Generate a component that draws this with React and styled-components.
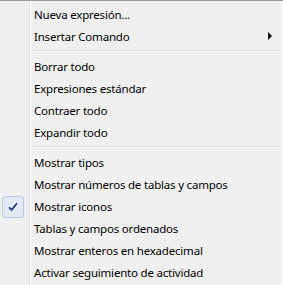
import React from 'react'
import styled, { createGlobalStyle } from 'styled-components'

const Global = createGlobalStyle`
  html, body {
    margin: 0;
    padding: 0;
    background: #f0f0f0;
  }
`

const Menu = styled.div`
  width: 283px;
  height: 285px;
  box-sizing: border-box;
  background: #f0f0f0;
  border-top: 1px solid #979797;
  padding-top: 2px;
  position: relative;
  font-family: "Noto Sans", "Open Sans", sans-serif;
  font-size: 11.5px;
  letter-spacing: -0.2px;
  color: #000;
  overflow: hidden;
  box-shadow: inset -1px 0 0 #fafafa, inset 0 -2px 0 #f0f0f0;

  &::before {
    content: '';
    position: absolute;
    top: 1px;
    bottom: 0;
    left: 29px;
    width: 1px;
    background: #e2e3e3;
    border-right: 1px solid #ffffff;
  }
`

const Row = styled.div`
  position: relative;
  height: 22px;
  display: flex;
  align-items: center;
  padding-left: 34px;
  padding-right: 10px;
`

const Label = styled.span`
  flex: 1;
  white-space: nowrap;
`

const Arrow = styled.span`
  width: 0;
  height: 0;
  border-top: 4px solid transparent;
  border-bottom: 4px solid transparent;
  border-left: 4px solid #000;
  margin-right: 1px;
`

const CheckBox = styled.span`
  position: absolute;
  left: 2px;
  top: 1px;
  width: 20px;
  height: 20px;
  border: 1px solid #b7c8e6;
  border-radius: 3px;
  background: #e3eaf6;
  display: flex;
  align-items: center;
  justify-content: center;
`

const Separator = styled.div`
  height: 8px;
  display: flex;
  align-items: center;
  padding-left: 30px;
  padding-right: 2px;

  &::after {
    content: '';
    flex: 1;
    height: 1px;
    background: #e0e0e0;
    border-bottom: 1px solid #ffffff;
  }
`

const groups = [
  [
    { label: 'Nueva expresión...' },
    { label: 'Insertar Comando', submenu: true },
  ],
  [
    { label: 'Borrar todo' },
    { label: 'Expresiones estándar' },
    { label: 'Contraer todo' },
    { label: 'Expandir todo' },
  ],
  [
    { label: 'Mostrar tipos' },
    { label: 'Mostrar números de tablas y campos' },
    { label: 'Mostrar iconos', checked: true },
    { label: 'Tablas y campos ordenados' },
    { label: 'Mostrar enteros en hexadecimal' },
    { label: 'Activar seguimiento de actividad' },
  ],
]

function Check() {
  return (
    <svg width="10" height="10" viewBox="0 0 10 10">
      <path d="M1 5.2 L3.6 8 L9 1.2" fill="none" stroke="#1c2a8c" strokeWidth="1.6" strokeLinejoin="miter" />
    </svg>
  )
}

export default function App() {
  return (
    <>
      <Global />
      <Menu>
        {groups.map((items, gi) => (
          <React.Fragment key={gi}>
            {gi > 0 && <Separator />}
            {items.map((it) => (
              <Row key={it.label}>
                {it.checked && <CheckBox><Check /></CheckBox>}
                <Label>{it.label}</Label>
                {it.submenu && <Arrow />}
              </Row>
            ))}
          </React.Fragment>
        ))}
      </Menu>
    </>
  )
}
